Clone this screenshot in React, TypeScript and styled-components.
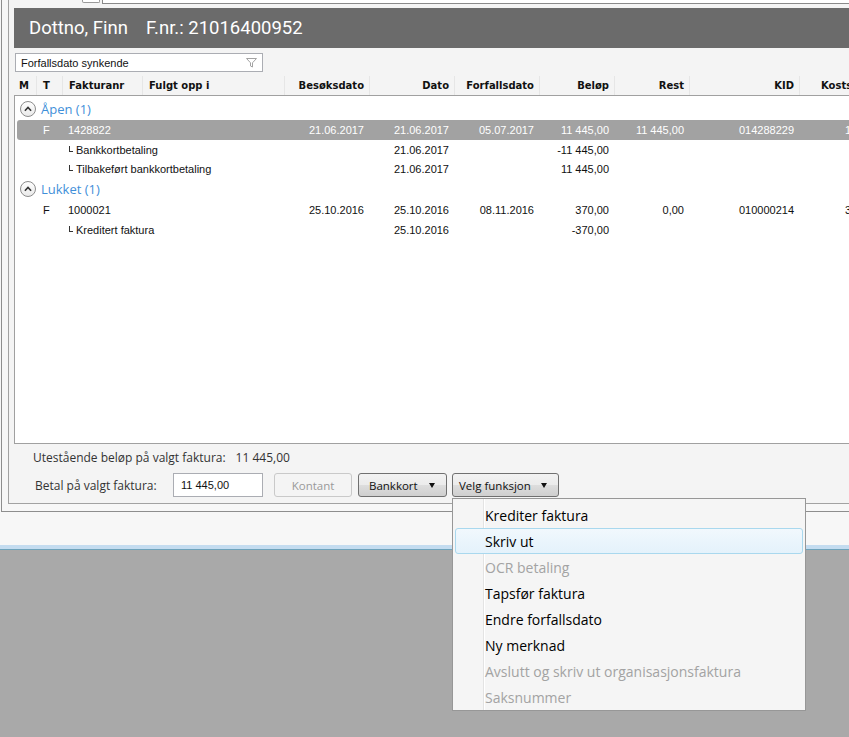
import React from "react";
import styled, { createGlobalStyle } from "styled-components";

const GlobalStyle = createGlobalStyle`
  html, body {
    margin: 0;
    padding: 0;
  }
  body {
    width: 849px;
    height: 737px;
    overflow: hidden;
    background: #a9a9a9;
  }
`;

const COLS = "20px 26px 80px 142px 85px 85px 85px 75px 75px 110px 110px";

type Align = "left" | "right";

interface Column {
  title: string;
  align: Align;
  pad?: number;
}

const columns: Column[] = [
  { title: "M", align: "left", pad: 2 },
  { title: "T", align: "left" },
  { title: "Fakturanr", align: "left" },
  { title: "Fulgt opp i", align: "left" },
  { title: "Besøksdato", align: "right" },
  { title: "Dato", align: "right" },
  { title: "Forfallsdato", align: "right" },
  { title: "Beløp", align: "right" },
  { title: "Rest", align: "right" },
  { title: "KID", align: "right" },
  { title: "Kostsenter", align: "left", pad: 21 },
];

interface Invoice {
  type: string;
  nr: string;
  visit: string;
  date: string;
  due: string;
  amount: string;
  rest: string;
  kid: string;
  cost: string;
  selected?: boolean;
  lines: { label: string; date: string; amount: string }[];
}

const groups: { title: string; invoices: Invoice[] }[] = [
  {
    title: "Åpen (1)",
    invoices: [
      {
        type: "F",
        nr: "1428822",
        visit: "21.06.2017",
        date: "21.06.2017",
        due: "05.07.2017",
        amount: "11 445,00",
        rest: "11 445,00",
        kid: "014288229",
        cost: "1200",
        selected: true,
        lines: [
          { label: "Bankkortbetaling", date: "21.06.2017", amount: "-11 445,00" },
          { label: "Tilbakeført bankkortbetaling", date: "21.06.2017", amount: "11 445,00" },
        ],
      },
    ],
  },
  {
    title: "Lukket (1)",
    invoices: [
      {
        type: "F",
        nr: "1000021",
        visit: "25.10.2016",
        date: "25.10.2016",
        due: "08.11.2016",
        amount: "370,00",
        rest: "0,00",
        kid: "010000214",
        cost: "3200",
        lines: [{ label: "Kreditert faktura", date: "25.10.2016", amount: "-370,00" }],
      },
    ],
  },
];

const menuItems = [
  { label: "Krediter faktura" },
  { label: "Skriv ut", active: true },
  { label: "OCR betaling", disabled: true },
  { label: "Tapsfør faktura" },
  { label: "Endre forfallsdato" },
  { label: "Ny merknad" },
  { label: "Avslutt og skriv ut organisasjonsfaktura", disabled: true },
  { label: "Saksnummer", disabled: true },
];

const CircleChevron = () => (
  <svg width="16" height="16" viewBox="0 0 16 16">
    <defs>
      <linearGradient id="cc" x1="0" y1="0" x2="0" y2="1">
        <stop offset="0" stopColor="#ffffff" />
        <stop offset="1" stopColor="#e9e9e9" />
      </linearGradient>
    </defs>
    <circle cx="8" cy="8" r="7.5" fill="url(#cc)" stroke="#8c8c8c" />
    <path d="M4.9 9.7 L8 6.5 L11.1 9.7" fill="none" stroke="#333" strokeWidth="1.6" />
  </svg>
);

const FunnelIcon = () => (
  <svg width="11" height="11" viewBox="0 0 11 11">
    <path
      d="M0.5 1.5 H10.5 L6.5 5.8 V10 L4.5 9 V5.8 Z"
      fill="#ffffff"
      stroke="#a3a3a3"
      strokeLinejoin="round"
    />
  </svg>
);

const App = () => {
  return (
    <>
      <GlobalStyle />
      <Page>
        <Frame>
          <Panel>
            <TopStrip>
              <StubButton />
              <StubField />
            </TopStrip>
            <HeaderBar>
              <span>Dottno, Finn</span>
              <span>F.nr.: 21016400952</span>
            </HeaderBar>
            <Toolbar>
              <FilterBox>
                <span>Forfallsdato synkende</span>
                <FunnelIcon />
              </FilterBox>
            </Toolbar>
            <HeaderRow>
              {columns.map((c) => (
                <HeaderCell key={c.title} $align={c.align} $pad={c.pad}>
                  {c.title}
                </HeaderCell>
              ))}
            </HeaderRow>
            <GridBody>
              {groups.map((g) => (
                <React.Fragment key={g.title}>
                  <GroupRow>
                    <CircleChevron />
                    <GroupTitle>{g.title}</GroupTitle>
                  </GroupRow>
                  {g.invoices.map((inv) => (
                    <React.Fragment key={inv.nr}>
                      <Row $selected={inv.selected}>
                        <Cell $align="left" />
                        <Cell $align="left" $pad={6}>
                          {inv.type}
                        </Cell>
                        <Cell $align="left">{inv.nr}</Cell>
                        <Cell $align="left" />
                        <Cell $align="right">{inv.visit}</Cell>
                        <Cell $align="right">{inv.date}</Cell>
                        <Cell $align="right">{inv.due}</Cell>
                        <Cell $align="right">{inv.amount}</Cell>
                        <Cell $align="right">{inv.rest}</Cell>
                        <Cell $align="right">{inv.kid}</Cell>
                        <Cell $align="left" $pad={45}>
                          {inv.cost}
                        </Cell>
                      </Row>
                      {inv.lines.map((l) => (
                        <Row key={l.label} $sub>
                          <Cell $align="left" />
                          <Cell $align="left" />
                          <LineLabel>
                            <Corner />
                            {l.label}
                          </LineLabel>
                          <Cell $align="right" />
                          <Cell $align="right">{l.date}</Cell>
                          <Cell $align="right" />
                          <Cell $align="right">{l.amount}</Cell>
                        </Row>
                      ))}
                    </React.Fragment>
                  ))}
                </React.Fragment>
              ))}
            </GridBody>
            <SummaryRow>
              <span>Utestående beløp på valgt faktura:</span>
              <span>11 445,00</span>
            </SummaryRow>
            <PayRow>
              <PayLabel>Betal på valgt faktura:</PayLabel>
              <AmountInput>11 445,00</AmountInput>
              <Button $disabled $width={78} $gap={6}>
                Kontant
              </Button>
              <Button $width={89} $spaced $gap={5}>
                <span>Bankkort</span>
                <Arrow />
              </Button>
              <MenuAnchor>
                <Button $width={107} $spaced $tight>
                  <span>Velg funksjon</span>
                  <Arrow />
                </Button>
                <Menu>
                  {menuItems.map((m) => (
                    <MenuItem key={m.label} $active={m.active} $disabled={m.disabled}>
                      {m.label}
                    </MenuItem>
                  ))}
                </Menu>
              </MenuAnchor>
            </PayRow>
          </Panel>
        </Frame>
        <Gap />
        <TaskStrip />
        <Desktop />
      </Page>
    </>
  );
};

export default App;

const Page = styled.div`
  display: flex;
  flex-direction: column;
  height: 737px;
  background: #f7f7f7;
  overflow: hidden;
`;

const Frame = styled.div`
  box-sizing: border-box;
  height: 512px;
  margin-left: 1px;
  padding-left: 6px;
  border-left: 1px solid #8e8e8e;
  border-bottom: 1px solid #8e8e8e;
  background: #f7f7f7;
`;

const Panel = styled.div`
  box-sizing: border-box;
  height: 504px;
  padding-left: 5px;
  border-left: 1px solid #a2a2a2;
  border-bottom: 1px solid #a2a2a2;
  background: #f4f4f4;
  display: flex;
  flex-direction: column;
`;

const TopStrip = styled.div`
  height: 8px;
  display: flex;
  align-items: flex-start;
`;

const StubButton = styled.div`
  box-sizing: border-box;
  width: 18px;
  height: 3px;
  margin-left: 68px;
  background: #ffffff;
  border: 1px solid #9a9a9a;
  border-top: none;
  border-radius: 0 0 2px 2px;
`;

const StubField = styled.div`
  box-sizing: border-box;
  flex: 1;
  height: 4px;
  margin-left: 2px;
  background: #ffffff;
  border-left: 1px solid #8a8a8a;
  border-bottom: 1px solid #8a8a8a;
`;

const HeaderBar = styled.div`
  height: 40px;
  display: flex;
  align-items: center;
  gap: 18px;
  padding-left: 15px;
  background: #6b6b6b;
  color: #ffffff;
  font-family: Roboto, "Open Sans", sans-serif;
  font-size: 18.5px;
`;

const Toolbar = styled.div`
  height: 28px;
  padding-top: 5px;
  box-sizing: border-box;
`;

const FilterBox = styled.div`
  box-sizing: border-box;
  width: 248px;
  height: 19px;
  margin-left: 1px;
  padding: 0 5px 0 5px;
  display: flex;
  align-items: center;
  justify-content: space-between;
  background: #ffffff;
  border: 1px solid #abadb3;
  font-family: "Liberation Sans", Arial, sans-serif;
  font-size: 11px;
  color: #111;
`;

const HeaderRow = styled.div`
  box-sizing: border-box;
  height: 20px;
  padding-left: 3px;
  display: grid;
  grid-template-columns: ${COLS};
  border-bottom: 1px solid #a0a0a0;
  white-space: nowrap;
  overflow: hidden;
`;

const HeaderCell = styled.div<{ $align: Align; $pad?: number }>`
  display: flex;
  align-items: center;
  justify-content: ${(p) => (p.$align === "right" ? "flex-end" : "flex-start")};
  padding-left: ${(p) => (p.$align === "left" ? `${p.$pad ?? 6}px` : "0")};
  padding-right: ${(p) => (p.$align === "right" ? "5px" : "0")};
  border-right: 1px solid #e6e6e6;
  font-family: "DejaVu Sans", Verdana, sans-serif;
  font-weight: bold;
  font-size: 10px;
  color: #111;
`;

const GridBody = styled.div`
  box-sizing: border-box;
  height: 348px;
  padding-top: 2px;
  background: #ffffff;
  border-left: 1px solid #a0a0a0;
  border-bottom: 1px solid #a0a0a0;
  overflow: hidden;
`;

const GroupRow = styled.div`
  height: 22px;
  display: flex;
  align-items: center;
  gap: 5px;
  padding-left: 5px;
`;

const GroupTitle = styled.span`
  font-family: "Open Sans", sans-serif;
  font-size: 13px;
  color: #3f8fd9;
`;

const Row = styled.div<{ $selected?: boolean; $sub?: boolean }>`
  height: ${(p) => (p.$sub ? "19px" : "20px")};
  margin-left: 2px;
  display: grid;
  grid-template-columns: ${COLS};
  white-space: nowrap;
  background: ${(p) => (p.$selected ? "#a2a2a2" : "transparent")};
  border-radius: 3px 0 0 3px;
  color: ${(p) => (p.$selected ? "#ffffff" : "#111111")};
  font-family: "Liberation Sans", Arial, sans-serif;
  font-size: 11px;
`;

const Cell = styled.div<{ $align: Align; $pad?: number }>`
  display: flex;
  align-items: center;
  justify-content: ${(p) => (p.$align === "right" ? "flex-end" : "flex-start")};
  padding-left: ${(p) => (p.$align === "left" ? `${p.$pad ?? 5}px` : "0")};
  padding-right: ${(p) => (p.$align === "right" ? "6px" : "0")};
  overflow: hidden;
`;

const LineLabel = styled.div`
  grid-column: 3 / span 2;
  display: flex;
  align-items: center;
  padding-left: 6px;
`;

const Corner = styled.span`
  box-sizing: border-box;
  width: 4px;
  height: 6px;
  margin-right: 3px;
  border-left: 1px solid #333;
  border-bottom: 1px solid #333;
  position: relative;
  top: -1px;
`;

const SummaryRow = styled.div`
  height: 26px;
  display: flex;
  align-items: center;
  gap: 10px;
  padding-left: 19px;
  font-family: "Open Sans", sans-serif;
  font-size: 12px;
  color: #333;
`;

const PayRow = styled.div`
  height: 24px;
  margin-top: 3px;
  padding-left: 21px;
  display: flex;
  align-items: center;
  font-family: "Open Sans", sans-serif;
  font-size: 12px;
  color: #333;
`;

const PayLabel = styled.span`
  width: 138px;
`;

const AmountInput = styled.div`
  box-sizing: border-box;
  width: 90px;
  height: 24px;
  margin-right: 11px;
  padding-left: 7px;
  display: flex;
  align-items: center;
  background: #ffffff;
  border: 1px solid #abadb3;
  font-family: "Liberation Sans", Arial, sans-serif;
  font-size: 11px;
  color: #111;
`;

const Button = styled.div<{
  $disabled?: boolean;
  $width: number;
  $spaced?: boolean;
  $tight?: boolean;
  $gap?: number;
}>`
  box-sizing: border-box;
  width: ${(p) => p.$width}px;
  height: 24px;
  margin-right: ${(p) => p.$gap ?? 0}px;
  padding: 0 ${(p) => (p.$spaced ? "11px" : "0")} 0
    ${(p) => (p.$tight ? "6px" : p.$spaced ? "10px" : "0")};
  display: flex;
  align-items: center;
  justify-content: ${(p) => (p.$spaced ? "space-between" : "center")};
  border-radius: 3px;
  border: 1px solid ${(p) => (p.$disabled ? "#c9c9c9" : "#707070")};
  background: ${(p) =>
    p.$disabled
      ? "#f4f4f4"
      : "linear-gradient(#f2f2f2 0%, #ebebeb 50%, #dddddd 51%, #cfcfcf 100%)"};
  color: ${(p) => (p.$disabled ? "#9a9a9a" : "#111")};
  font-family: "Open Sans", sans-serif;
  font-size: 11.5px;
`;

const Arrow = styled.span`
  width: 0;
  height: 0;
  border-left: 3.5px solid transparent;
  border-right: 3.5px solid transparent;
  border-top: 5px solid #111;
`;

const MenuAnchor = styled.div`
  position: relative;
`;

const Menu = styled.div`
  position: absolute;
  top: 25px;
  left: 0;
  box-sizing: border-box;
  width: 354px;
  height: 213px;
  padding-top: 3px;
  background: linear-gradient(
    to right,
    #f5f5f5 30px,
    #e3e3e3 30px,
    #e3e3e3 31px,
    #ffffff 31px,
    #ffffff 32px,
    #f5f5f5 32px
  );
  border: 1px solid #979797;
  z-index: 10;
`;

const MenuItem = styled.div<{ $active?: boolean; $disabled?: boolean }>`
  box-sizing: border-box;
  height: 26px;
  margin: 0 2px;
  padding-left: 29px;
  display: flex;
  align-items: center;
  border: 1px solid ${(p) => (p.$active ? "#a9d8ee" : "transparent")};
  border-radius: 3px;
  background: ${(p) => (p.$active ? "linear-gradient(#f1f8fd, #e4f2fb)" : "transparent")};
  color: ${(p) => (p.$disabled ? "#a3a3a3" : "#000")};
  font-family: "Open Sans", sans-serif;
  font-size: 14px;
`;

const Gap = styled.div`
  height: 33px;
  background: #f7f7f7;
`;

const TaskStrip = styled.div`
  height: 4px;
  background: #c4dcf0;
  border-bottom: 1px solid #6fa3bb;
`;

const Desktop = styled.div`
  flex: 1;
  background: #a9a9a9;
`;
